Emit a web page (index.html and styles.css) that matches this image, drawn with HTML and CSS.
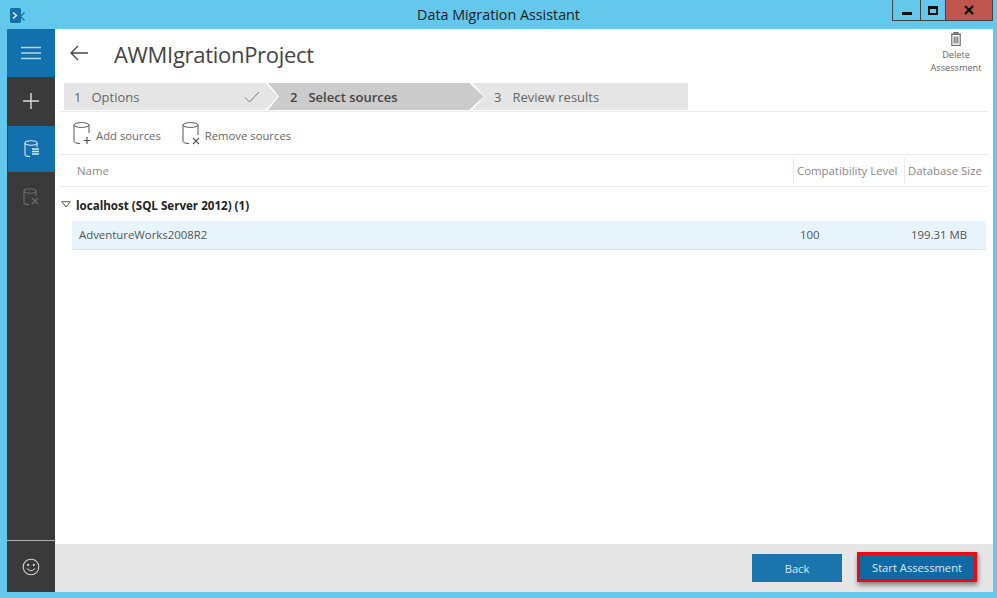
FILE: index.html
```html
<!DOCTYPE html>
<html lang="en">
<head>
    <meta charset="UTF-8">
    <title>Data Migration Assistant</title>
    <link rel="stylesheet" href="styles.css">
</head>
<body>
    <div class="titlebar">
        <div class="app-icon">
            <svg width="16" height="18" viewBox="0 0 16 18">
                <rect x="0" y="1" width="11" height="15" rx="1.5" fill="#1271ad"/>
                <path d="M3 5.5 L6.5 8.5 L3 11.5" fill="none" stroke="#fff" stroke-width="1.4"/>
                <path d="M14.5 5.5 L10.5 9.5 L14.5 13.5" fill="none" stroke="#1271ad" stroke-width="1.2"/>
            </svg>
        </div>
        <div class="title">Data Migration Assistant</div>
        <div class="window-controls">
            <div class="ctrl ctrl-min"><span class="min-glyph"></span></div>
            <div class="ctrl ctrl-max"><span class="max-glyph"></span></div>
            <div class="ctrl ctrl-close">
                <svg width="10" height="10" viewBox="0 0 10 10"><path d="M1 1 L9 9 M9 1 L1 9" stroke="#111" stroke-width="2.4"/></svg>
            </div>
        </div>
    </div>

    <div class="app">
        <nav class="sidebar">
            <div class="nav-item nav-blue">
                <svg width="20" height="14" viewBox="0 0 20 14"><path d="M0 1.5 H20 M0 7 H20 M0 12.5 H20" stroke="#b5d5e8" stroke-width="1.4"/></svg>
            </div>
            <div class="nav-item">
                <svg width="16" height="16" viewBox="0 0 16 16"><path d="M8 0 V16 M0 8 H16" stroke="#dcdcdc" stroke-width="1.4"/></svg>
            </div>
            <div class="nav-item nav-blue nav-active">
                <svg width="16" height="18" viewBox="0 0 16 18" fill="none" stroke="#d8e8f2" stroke-width="1.1">
                    <ellipse cx="7" cy="3" rx="6" ry="2.2"/>
                    <path d="M1 3 V14.5 Q1 16.5 6 16.5 M13 3 V7"/>
                    <path d="M8 9 H15 M8 11.5 H15 M8 14 H15" stroke-width="1.3"/>
                </svg>
            </div>
            <div class="nav-item nav-disabled">
                <svg width="16" height="18" viewBox="0 0 16 18" fill="none" stroke="#6e6e6e" stroke-width="1.1">
                    <ellipse cx="7" cy="3" rx="6" ry="2.2"/>
                    <path d="M1 3 V14.5 Q1 16.5 6 16.5 M13 3 V8"/>
                    <path d="M9 10 L15 16 M15 10 L9 16"/>
                </svg>
            </div>
            <div class="nav-bottom">
                <svg width="18" height="18" viewBox="0 0 18 18" fill="none" stroke="#d0d0d0" stroke-width="1.1">
                    <circle cx="9" cy="9" r="7.8"/>
                    <circle cx="6.2" cy="7" r="0.6"/>
                    <circle cx="11.8" cy="7" r="0.6"/>
                    <path d="M5 10.5 Q9 15 13 10.5"/>
                </svg>
            </div>
        </nav>

        <main class="content">
            <header class="page-head">
                <svg class="back-arrow" width="18" height="16" viewBox="0 0 18 16" fill="none" stroke="#444" stroke-width="1.3"><path d="M18 8 H1 M8 1 L1 8 L8 15"/></svg>
                <h1 class="project-name">AWMIgrationProject</h1>
                <div class="delete-btn">
                    <svg width="10" height="14" viewBox="0 0 10 14" fill="none" stroke="#666" stroke-width="1.1">
                        <path d="M0 2.2 H10 M3 2.2 V0.6 H7 V2.2"/>
                        <rect x="0.8" y="2.2" width="8.4" height="11.2"/>
                        <path d="M3.2 4.5 V11.5 M5 4.5 V11.5 M6.8 4.5 V11.5"/>
                    </svg>
                    <span>Delete<br>Assessment</span>
                </div>
            </header>

            <div class="steps">
                <div class="step step-first">
                    <span class="step-num">1</span><span>Options</span>
                    <svg class="step-check" width="16" height="12" viewBox="0 0 16 12" fill="none" stroke="#777" stroke-width="1"><path d="M1 6.5 L5.5 11 L15 1"/></svg>
                </div>
                <div class="step step-current">
                    <span class="step-num">2</span><span>Select sources</span>
                </div>
                <div class="step step-last">
                    <span class="step-num">3</span><span>Review results</span>
                </div>
            </div>

            <div class="toolbar">
                <div class="tool">
                    <svg width="20" height="23" viewBox="0 0 20 23" fill="none" stroke="#555" stroke-width="1">
                        <ellipse cx="8.5" cy="3" rx="7.5" ry="2.4"/>
                        <path d="M1 3 V19.5 Q1 21.5 7 21.5 M16 3 V11"/>
                        <path d="M14 15 V22 M10.5 18.5 H17.5" stroke-width="1.2"/>
                    </svg>
                    <span>Add sources</span>
                </div>
                <div class="tool">
                    <svg width="20" height="23" viewBox="0 0 20 23" fill="none" stroke="#555" stroke-width="1">
                        <ellipse cx="8.5" cy="3" rx="7.5" ry="2.4"/>
                        <path d="M1 3 V19.5 Q1 21.5 7 21.5 M16 3 V13"/>
                        <path d="M11 16 L17 22 M17 16 L11 22" stroke-width="1.1"/>
                    </svg>
                    <span>Remove sources</span>
                </div>
            </div>

            <div class="table-head">
                <div class="col-name">Name</div>
                <div class="col-level">Compatibility Level</div>
                <div class="col-size">Database Size</div>
            </div>

            <div class="group-row">
                <svg width="10" height="7" viewBox="0 0 10 7" fill="none" stroke="#555" stroke-width="1"><path d="M0.7 0.7 H9.3 L5 6 Z"/></svg>
                <span>localhost (SQL Server 2012) (1)</span>
            </div>
            <div class="db-row">
                <div class="cell-name">AdventureWorks2008R2</div>
                <div class="cell-level">100</div>
                <div class="cell-size">199.31 MB</div>
            </div>

            <footer class="footer">
                <button class="btn">Back</button>
                <button class="btn btn-start">Start Assessment</button>
            </footer>
        </main>
    </div>
</body>
</html>
```

FILE: styles.css
```css
html, body {
    margin: 0;
    height: 100%;
}

body {
    width: 997px;
    height: 598px;
    overflow: hidden;
    background-color: #63c8ec;
    font-family: "Open Sans", "Noto Sans", sans-serif;
    display: flex;
    flex-direction: column;
}

/* title bar */
.titlebar {
    height: 29px;
    display: grid;
    grid-template-columns: 1fr auto 1fr;
    padding: 0 4px;
}

.app-icon {
    padding: 7px 0 0 6px;
}

.title {
    font-size: 14.3px;
    line-height: 30px;
    color: #1c1c1c;
}

.window-controls {
    justify-self: end;
    display: flex;
    height: 21px;
}

.ctrl {
    height: 20px;
    border: 1px solid #444;
    border-top: none;
    border-left: none;
    display: flex;
    align-items: center;
    justify-content: center;
}

.ctrl-min {
    width: 27px;
    border-left: 1px solid #444;
}

.ctrl-max {
    width: 24px;
}

.ctrl-close {
    width: 46px;
    background-color: #c0554e;
}

.min-glyph {
    width: 10px;
    height: 3px;
    margin-top: 6px;
    background-color: #111;
}

.max-glyph {
    width: 6px;
    height: 4px;
    border: 2px solid #111;
    border-top-width: 3px;
}

/* main window */
.app {
    height: 563px;
    margin: 0 4px 0 7px;
    display: flex;
}

.sidebar {
    width: 48px;
    background-color: #3a3a3a;
    display: flex;
    flex-direction: column;
}

.nav-item {
    height: 48px;
    display: flex;
    align-items: center;
    justify-content: center;
}

.nav-blue {
    background-color: #1271ad;
}

.nav-active {
    height: 46px;
    margin: 1px 0 0 1px;
}

.nav-disabled {
    padding-top: 2px;
    height: 46px;
}

.nav-bottom {
    margin-top: auto;
    height: 51px;
    border-top: 1px solid #b0b0b0;
    display: flex;
    align-items: center;
    justify-content: center;
}

.content {
    flex: 1;
    background-color: #fff;
    display: flex;
    flex-direction: column;
}

/* header */
.page-head {
    height: 54px;
    padding-left: 15px;
    display: flex;
    align-items: flex-start;
}

.back-arrow {
    margin-top: 16px;
}

.project-name {
    margin: 8px 0 0 26px;
    font-size: 22px;
    font-weight: 400;
    line-height: 34px;
    color: #444;
    letter-spacing: -0.3px;
}

.delete-btn {
    margin-left: auto;
    width: 66px;
    margin-right: 4px;
    padding-top: 3px;
    text-align: center;
    font-size: 9.2px;
    line-height: 13px;
    color: #666;
}

.delete-btn svg {
    display: block;
    margin: 0 auto 2px;
}

/* steps */
.steps {
    height: 27px;
    margin-left: 9px;
    display: flex;
    font-size: 13px;
    line-height: 27px;
    color: #666;
}

.step {
    background-color: #e5e5e5;
    display: flex;
    align-items: center;
    flex-shrink: 0;
}

.step span {
    padding-top: 2px;
}

.step-num {
    margin-right: 10px;
}

.step-first {
    width: 214px;
    padding-left: 10px;
    box-sizing: border-box;
    position: relative;
    clip-path: polygon(0 0, 201px 0, 100% 50%, 201px 100%, 0 100%);
}

.step-check {
    position: absolute;
    left: 180px;
    top: 8px;
}

.step-current {
    width: 216px;
    margin-left: -10px;
    padding-left: 22px;
    box-sizing: border-box;
    background-color: #cbcbcb;
    color: #444;
    font-weight: 600;
    clip-path: polygon(0 0, 201px 0, 100% 50%, 201px 100%, 0 100%, 11px 50%);
}

.step-current .step-num {
    margin-right: 11px;
}

.step-last {
    width: 216px;
    margin-left: -12px;
    padding-left: 22px;
    box-sizing: border-box;
    clip-path: polygon(0 0, 100% 0, 100% 100%, 0 100%, 13px 50%);
}

.step-last .step-num {
    margin-right: 11px;
}

/* toolbar */
.toolbar {
    height: 42px;
    margin: 1px 5px 0 5px;
    padding-left: 13px;
    border-top: 1px solid #ebebeb;
    border-bottom: 1px solid #ebebeb;
    display: flex;
    align-items: center;
    gap: 21px;
    font-size: 11.3px;
    color: #666;
}

.tool {
    display: flex;
    align-items: center;
    gap: 3px;
}

.tool span {
    padding-top: 5px;
}

/* table */
.table-head,
.db-row {
    display: grid;
}

.table-head {
    height: 31px;
    margin: 0 6px 0 5px;
    grid-template-columns: 733px 111px 1fr;
    border-bottom: 1px solid #ebebeb;
    font-size: 11.4px;
    line-height: 31px;
    color: #888;
}

.col-name {
    padding-left: 17px;
}

.col-level,
.col-size {
    padding-left: 3px;
    white-space: nowrap;
    border-left: 1px solid #ebebeb;
    height: 26px;
    line-height: 25px;
    margin-top: 3px;
}

.group-row {
    height: 34px;
    padding-left: 6px;
    display: flex;
    align-items: center;
    gap: 5px;
    font-size: 11.6px;
    font-weight: 700;
    color: #222;
}

.group-row span {
    padding-top: 2px;
}

.db-row {
    height: 29px;
    margin: 0 7px 0 17px;
    padding-left: 7px;
    box-sizing: border-box;
    grid-template-columns: 721px 111px 1fr;
    background-color: #e8f4fb;
    border-bottom: 1px solid #e2e2e2;
    font-size: 11.4px;
    line-height: 28px;
    color: #555;
}

/* footer */
.footer {
    margin-top: auto;
    height: 48px;
    background-color: #e6e6e6;
    display: flex;
    justify-content: flex-end;
    align-items: flex-start;
    gap: 15px;
    padding: 8px 16px 0 0;
    box-sizing: border-box;
}

.btn {
    width: 90px;
    height: 28px;
    margin-top: 2px;
    border: none;
    background-color: #1a75ad;
    color: #dbe9f2;
    font-family: inherit;
    font-size: 11.2px;
}

.btn-start {
    width: 120px;
    height: 30px;
    margin-top: 0;
    background-color: #0f6aa3;
    border: 3px solid #ea0a14;
    box-shadow: 1px 3px 5px rgba(0, 0, 0, 0.45);
}
```
